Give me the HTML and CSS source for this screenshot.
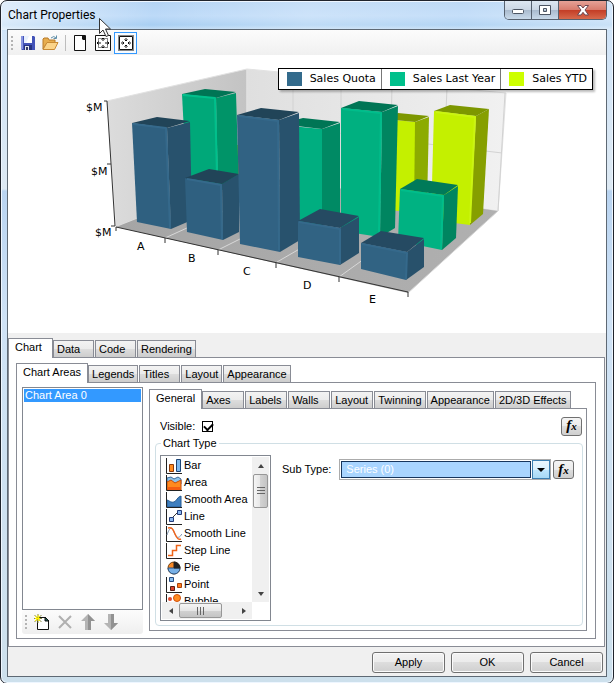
FILE: index.html
```html
<!DOCTYPE html>
<html lang="en">

<head>
  <meta charset="UTF-8" />
  <meta name="viewport" content="width=device-width, initial-scale=1.0" />
  <title>Chart Properties</title>
  <link rel="stylesheet" href="styles.css">
</head>

<body>
  <div class="window">
    <header class="titlebar">
      <h1 class="title">Chart Properties</h1>
      <div class="window-buttons">
        <button class="win-btn" aria-label="Minimize"><svg width="14" height="10" viewBox="0 0 14 10"><rect x="1.500" y="4.500" width="11" height="4" rx="1" fill="#fff" stroke="#4c5563" /></svg></button>
        <button class="win-btn" aria-label="Maximize"><svg width="14" height="11" viewBox="0 0 14 11"><path d="M1.500 .5h11v9h-11z M5.500 3.500v3h3v-3z" fill="#fff" fill-rule="evenodd" stroke="#4c5563" /></svg></button>
        <button class="win-btn win-close" aria-label="Close"><svg width="14" height="11" viewBox="0 0 14 11"><path d="M1.500 .5h3.500l2 2.500 2-2.500h3.500l-3.500 4.500 3.500 5h-3.500l-2-2.700-2 2.700h-3.500l3.500-5z" fill="#fff" stroke="#6b4750" /></svg></button>
      </div>
    </header>

    <main class="client">
      <div class="toolbar">
        <span class="grip"></span>
        <button class="tool" aria-label="Save">
          <svg width="16" height="16" viewBox="0 0 16 16"><path d="M1 1h13l1 1v13H2l-1-1z" fill="#4353b8" /><path d="M1 1h2v13H1z" fill="#8895e0" /><path d="M4 1h8v7H4z" fill="#e8f0fc" /><path d="M9 1h3v7H6z" fill="#fff" /><path d="M4 10h8v5H4z" fill="#26337f" /><path d="M5 11h4v4H5z" fill="#e6e8ef" /><path d="M6 12h2v3H6z" fill="#343c64" /></svg>
        </button>
        <button class="tool" aria-label="Open">
          <svg width="17" height="16" viewBox="0 0 17 16"><path d="M1 14V4l1-1h4l1 2h6v3H5z" fill="#e7ad4e" stroke="#b87b28" /><path d="M1 14.500l4-7h11l-3.500 7z" fill="#fbd48a" stroke="#c88a35" /><path d="M9 3q3-3 5 0M14.500 .5v3h-3" fill="none" stroke="#5f8fa9" /></svg>
        </button>
        <span class="separator"></span>
        <button class="tool" aria-label="Blank page">
          <svg width="16" height="16" viewBox="0 0 16 16"><path d="M2.500 .5h11v15h-11z" fill="#fff" stroke="#111" /><path d="M10 1h4v4h-3l-1-1z" fill="#111" /></svg>
        </button>
        <button class="tool" aria-label="Actual size">
          <svg width="16" height="16" viewBox="0 0 16 16" fill="none" stroke="#111"><path d="M.5 .5h15v15H.5z" fill="#fff" /><path d="M3.500 3.500h9v9h-9z" stroke-dasharray="1 1" /><path d="M8 3v3M8 10v3M2 8h4M10 8h4M6.500 4.500L8 3l1.500 1.500M6.500 11.500L8 13l1.500-1.500M3.500 6.500L2 8l1.500 1.500M12.500 6.500L14 8l-1.500 1.500" /></svg>
        </button>
        <button class="tool tool-on" aria-label="Fit to window" aria-pressed="true">
          <svg width="16" height="16" viewBox="0 0 16 16" fill="none" stroke="#111"><path d="M.5 .5h15v15H.5z" stroke-dasharray="1 1" fill="#fff" /><path d="M1.500 1.500h13v13h-13z" /><path d="M8 3v3M8 10v3M3 8h3M10 8h3M6.500 4.500L8 6l1.500-1.500M6.500 11.500L8 10l1.500 1.500M4.500 6.500L6 8l-1.500 1.500M11.500 6.500L10 8l1.500 1.500" /></svg>
        </button>
      </div>

      <section class="preview">
        <svg class="chart" viewBox="8 55 598 278" role="img" aria-label="Sales by quota, last year and YTD">
          <defs>
            <linearGradient id="wall" x1="0" x2="1"><stop offset="0" stop-color="#dcdcdc" /><stop offset="1" stop-color="#c3c3c3" /></linearGradient>
            <linearGradient id="back" x1="0" x2="1"><stop offset="0" stop-color="#dfdfdf" /><stop offset="1" stop-color="#f1f1f1" /></linearGradient>
            <linearGradient id="floor" x1="0" x2="1"><stop offset="0" stop-color="#a5a5a5" /><stop offset="1" stop-color="#b0b0b0" /></linearGradient>
          </defs>

          <!-- walls and floor -->
          <path d="M107 101L247 69V175L116 227z" fill="url(#wall)" stroke="#e2e2e2" />
          <path d="M247 69L506 93L498 211L247 175z" fill="url(#back)" stroke="#e2e2e2" />
          <path d="M116 227L247 175L498 211L408 293z" fill="url(#floor)" />
          <path d="M247 122L502 153M293 73V182M341 78V188M392 83L390 196M447 88L442 203M505 93L498 211" class="grid-line" />
          <path d="M165 238L290 181M218 250L340 189M277 262L391 196M339 277L442 203M408 293L498 211" class="floor-line" />

          <!-- Sales YTD -->
          <path d="M237 145h3v30h-3z" fill="#a0b800" />
          <path d="M385 119L415 122V212L385 210z" fill="#c4f000" />
          <path d="M415 122L429 117L427 205L414 212z" fill="#8cab00" />
          <path d="M385 119L398 113L429 116L415 122z" fill="#7d9700" />
          <path d="M434 111L476 116L470 225L431 220z" fill="#c4f000" />
          <path d="M476 116L489 109L483 214L470 225z" fill="#869f00" />
          <path d="M434 111L450 105L489 109L476 116z" fill="#7d9700" />
          <path d="M436 112L475 117L470 223" stroke="#cbf510" class="edge" />

          <!-- Sales Last Year -->
          <path d="M182 94L216 98L218 190L187 190z" fill="#00a879" />
          <path d="M216 98L236 93L239 190H218z" fill="#009468" />
          <path d="M182 94L205 89L236 92L216 98z" fill="#007555" />
          <path d="M183 95L215 98L217 175" stroke="#00c08c" class="edge" />
          <path d="M280 125L322 129V225H280z" fill="#00ae80" />
          <path d="M322 129L340 123V222L322 225z" fill="#008a64" />
          <path d="M280 124L303 118L340 122L322 129z" fill="#007555" />
          <path d="M341 108L382 112L380 237L341 231z" fill="#00b080" />
          <path d="M382 112L398 106L395 228L380 237z" fill="#008560" />
          <path d="M341 108L359 101L398 105L382 112z" fill="#007555" />
          <path d="M343 109L381 113L379 235" stroke="#00bd8b" class="edge" />
          <path d="M400 189L444 195L442 250L398 241z" fill="#00b282" />
          <path d="M444 195L458 186L456 238L442 250z" fill="#008560" />
          <path d="M400 189L417 179L458 185L444 195z" fill="#007a59" />
          <path d="M401 190L443 196L441 249" stroke="#00bd8b" class="edge" />

          <!-- Sales Quota -->
          <path d="M132 123L167 128L171 229L137 222z" fill="#2f6080" />
          <path d="M167 128L190 122L192 220L171 229z" fill="#28526d" />
          <path d="M132 123L157 117L190 121L167 128z" fill="#214458" />
          <path d="M133 124L166 128L170 228" stroke="#35698b" class="edge" />
          <path d="M185 178L222 184L223 240L187 232z" fill="#2f6080" />
          <path d="M222 184L239 174V232L223 240z" fill="#28526d" />
          <path d="M185 178L209 169L239 174L222 184z" fill="#214458" />
          <path d="M187 179L221 185L222 239" stroke="#35698b" class="edge" />
          <path d="M237 115L279 120L280 252L240 244z" fill="#316283" />
          <path d="M279 120L299 113L300 240L280 252z" fill="#28526d" />
          <path d="M237 115L261 108L299 112L279 120z" fill="#214458" />
          <path d="M239 116L278 121L279 250" stroke="#35698b" class="edge" />
          <path d="M298 221L340 228V265L298 257z" fill="#316383" />
          <path d="M340 228L359 217V253L340 265z" fill="#28516b" />
          <path d="M298 221L320 209L359 216L340 228z" fill="#254a62" />
          <path d="M299 222L340 229V264" stroke="#35698b" class="edge" />
          <path d="M361 243L407 252L406 280L361 269z" fill="#316383" />
          <path d="M407 252L424 239V267L406 280z" fill="#28516b" />
          <path d="M361 243L381 231L424 238L407 252z" fill="#254a62" />
          <path d="M362 244L407 253L406 279" stroke="#35698b" class="edge" />

          <!-- axes -->
          <path d="M104 101h3L115 226h-4M107 164h4M116 231v-4L408 292v5M165 238v5M218 250v5M276 263v5M339 277v5" fill="none" stroke="#333" />
          <g class="axis-label">
            <text x="86" y="111">$M</text>
            <text x="91" y="175">$M</text>
            <text x="95" y="236">$M</text>
            <text x="137" y="250">A</text>
            <text x="188" y="262">B</text>
            <text x="243" y="275">C</text>
            <text x="303" y="289">D</text>
            <text x="369" y="303">E</text>
          </g>
        </svg>
        <ul class="legend">
          <li><i class="swatch quota"></i>Sales Quota</li>
          <li><i class="swatch last-year"></i>Sales Last Year</li>
          <li><i class="swatch ytd"></i>Sales YTD</li>
        </ul>
      </section>

      <section class="properties">
        <div class="tabs">
          <button class="tab selected">Chart</button>
          <button class="tab">Data</button>
          <button class="tab">Code</button>
          <button class="tab">Rendering</button>
        </div>
        <div class="panel panel-chart">
          <div class="tabs">
            <button class="tab selected">Chart Areas</button>
            <button class="tab">Legends</button>
            <button class="tab">Titles</button>
            <button class="tab">Layout</button>
            <button class="tab">Appearance</button>
          </div>
          <div class="panel panel-areas">
            <div class="areas">
              <ul class="area-list" role="listbox" aria-label="Chart areas">
                <li role="option" aria-selected="true">Chart Area 0</li>
              </ul>
              <div class="area-tools">
                <span class="grip"></span>
                <button class="tool" aria-label="Add">
                  <svg width="16" height="16" viewBox="0 0 16 16"><path d="M3.500 3.500h8l3 3v9h-11z" fill="#fff" stroke="#111" /><path d="M11 3l4 4h-4z" fill="#1b5b4d" stroke="#111" /><path d="M4 0v9M0 4.500h8M.5 1l7 7M7.500 1l-7 7" stroke="#8b8b40" /><path d="M4 1v6M1 4.500h5M1 2l5 5M6 2L1 7" stroke="#fff200" /></svg>
                </button>
                <button class="tool" aria-label="Delete" disabled>
                  <svg width="16" height="16" viewBox="0 0 16 16"><path d="M2 2l12 12M14 2L2 14" fill="none" stroke="#b0b0b0" stroke-width="2" /></svg>
                </button>
                <button class="tool" aria-label="Move up" disabled>
                  <svg width="16" height="16" viewBox="0 0 16 16"><path d="M8 0L1 7h4v9h6V7h4z" fill="#b4b4b4" /><path d="M8 0v16h3V7h4z" fill="#929292" /></svg>
                </button>
                <button class="tool" aria-label="Move down" disabled>
                  <svg width="16" height="16" viewBox="0 0 16 16"><path d="M8 16L1 9h4V0h6v9h4z" fill="#b4b4b4" /><path d="M8 16V0h3v9h4z" fill="#929292" /></svg>
                </button>
              </div>
            </div>

            <div class="area-settings">
              <div class="tabs">
                <button class="tab selected">General</button>
                <button class="tab">Axes</button>
                <button class="tab">Labels</button>
                <button class="tab">Walls</button>
                <button class="tab">Layout</button>
                <button class="tab">Twinning</button>
                <button class="tab">Appearance</button>
                <button class="tab">2D/3D Effects</button>
              </div>
              <div class="panel panel-general">
                <div class="visible-row">
                  <label for="visible">Visible:</label>
                  <input type="checkbox" id="visible" class="check" checked>
                  <button class="fx" aria-label="Visible expression"><i>f</i><i class="x">x</i></button>
                </div>
                <fieldset class="group">
                  <legend>Chart Type</legend>
                  <div class="group-body">
                    <div class="type-box">
                      <ul class="type-list" role="listbox" aria-label="Chart type">
                        <li role="option"><svg class="type-icon" viewBox="0 0 16 16"><path d="M.5 0v15.500H16" class="frame" /><path d="M3.500 6.500h4v7h-4z" fill="#ff8b1f" stroke="#8b3a0a" /><path d="M10.500 1.500h4v12h-4z" fill="#7cb8ee" stroke="#1d4474" /></svg>Bar</li>
                        <li role="option"><svg class="type-icon" viewBox="0 0 16 16"><path d="M1 3l4-1 3 2 4-2 3 2v5H1z" fill="#8cc3ea" stroke="#3a6a9b" /><path d="M1 7l4-2 4 3 6-3v10H1z" fill="#ff8a1e" stroke="#c44b0a" /><path d="M2 12h12v3H2z" fill="#f45d12" /><path d="M.5 0v15.500H16" class="frame" /></svg>Area</li>
                        <li role="option"><svg class="type-icon" viewBox="0 0 16 16"><path d="M1 8c3 1 4 3 7 2s3-5 7-6v11H1z" fill="#3f7fbf" stroke="#245a92" /><path d="M.5 0v15.500H16" class="frame" /></svg>Smooth Area</li>
                        <li role="option"><svg class="type-icon" viewBox="0 0 16 16"><path d="M.5 0v15.500H16" class="frame" /><path d="M5 10l7-7" stroke="#333" /><path d="M3.500 8.500h4v4h-4zM11.500 1.500h4v4h-4z" fill="#8cb8f0" stroke="#233b78" /></svg>Line</li>
                        <li role="option"><svg class="type-icon" viewBox="0 0 16 16"><path d="M.5 0v15.500H16" class="frame" /><path d="M1 9C4 0 6 1 8 6s4 8 8 2" fill="none" stroke="#7d93ad" /><path d="M2 2c4-1 5 1 7 6s4 6 6 5" fill="none" stroke="#f0641c" stroke-width="1.500" /></svg>Smooth Line</li>
                        <li role="option"><svg class="type-icon" viewBox="0 0 16 16"><path d="M.5 0v15.500H16" class="frame" /><path d="M2 12.500h4.500v-5h4v-5H15" fill="none" stroke="#ee6418" stroke-width="1.500" /></svg>Step Line</li>
                        <li role="option"><svg class="type-icon" viewBox="0 0 16 16"><circle cx="8" cy="8" r="6" fill="#f98824" stroke="#70400f" /><path d="M2 8a6 6 0 0 0 12 0z" fill="#78b0e6" stroke="#2a5585" /><path d="M8 8V2a6 6 0 0 1 6 6z" fill="#222" stroke="#222" /></svg>Pie</li>
                        <li role="option"><svg class="type-icon" viewBox="0 0 16 16"><path d="M.5 0v15.500H16" class="frame" /><path d="M3.500 .5h4v4h-4z" fill="#8cc0f0" stroke="#274c80" /><path d="M4.500 9.500h4v4h-4z" fill="#d8402a" stroke="#5c1f14" /><path d="M11.500 6.500h4v4h-4z" fill="#ff7d20" stroke="#a8430c" /></svg>Point</li>
                        <li role="option"><svg class="type-icon" viewBox="0 0 16 16"><path d="M.5 0v15.500H16" class="frame" /><circle cx="4" cy="5" r="2" fill="#e04a30" /><circle cx="11" cy="4" r="3.500" fill="#ff8c22" stroke="#d1500d" /><circle cx="6" cy="11" r="3" fill="#78b0e6" /></svg>Bubble</li>
                      </ul>
                      <div class="scroll-v">
                        <button class="arrow up" aria-label="Scroll up"></button>
                        <span class="thumb"></span>
                        <button class="arrow down" aria-label="Scroll down"></button>
                      </div>
                      <div class="scroll-h">
                        <button class="arrow left" aria-label="Scroll left"></button>
                        <span class="thumb"></span>
                        <button class="arrow right" aria-label="Scroll right"></button>
                      </div>
                    </div>
                    <div class="sub-type">
                      <label for="subtype">Sub Type:</label>
                      <div class="combo">
                        <select id="subtype">
                          <option>Series (0)</option>
                        </select>
                        <span class="combo-arrow"></span>
                      </div>
                      <button class="fx" aria-label="Sub type expression"><i>f</i><i class="x">x</i></button>
                    </div>
                  </div>
                </fieldset>
              </div>
            </div>
          </div>
        </div>
      </section>

      <footer class="actions">
        <button class="action">Apply</button>
        <button class="action">OK</button>
        <button class="action">Cancel</button>
      </footer>
    </main>

    <svg class="pointer" width="13" height="20" viewBox="0 0 13 20"><path d="M.5 .5v15l3.500-3.500 3 6.500 2.500-1-3-6.500h5z" fill="#fff" stroke="#333" /></svg>
  </div>
</body>

</html>
```
FILE: styles.css
```css
* {
  margin: 0;
  padding: 0;
  box-sizing: border-box;
}

body {
  background: #fff;
  color: #000;
  font: 11px/13px "Liberation Sans", Arial, sans-serif;
}

button,
input,
select {
  font: inherit;
  color: inherit;
}

ul {
  list-style: none;
}

/* window frame */
.window {
  position: relative;
  display: flex;
  flex-direction: column;
  min-height: 100vh;
  padding: 0 6px 6px;
  border: 1px solid #20242c;
  border-radius: 7px;
  box-shadow: inset 0 0 0 1px #eef6ff;
  background:
    linear-gradient(100deg, #ffffff90, #ffffff00 25%, #ffffff40 50%, #ffffff20 75%, #ffffff60) 0 0 / 100% 29px no-repeat,
    linear-gradient(#b4d4f4, #bddaf8 15px, #a9cff2 24px, #d0e4f8 30px, #dde9f3 188px, #b9d4f1 190px, #cfe2f5 320px, #cde0ec);
}

.titlebar {
  display: flex;
  justify-content: space-between;
  height: 28px;
}

.title {
  padding: 5px 0 0 1px;
  font: 12px/18px Roboto, "Noto Sans", sans-serif;
}

.window-buttons {
  display: flex;
  height: 19px;
  border: 1px solid #56616f;
  border-top: 0;
  border-radius: 0 0 5px 5px;
  overflow: hidden;
}

.win-btn {
  display: flex;
  align-items: center;
  justify-content: center;
  width: 27px;
  border: 0;
  border-right: 1px solid #56616f;
  background: linear-gradient(#dde7f2, #cad6e4 50%, #a9bacd 50%, #c8d9ea);
}

.win-close {
  width: 47px;
  border-right: 0;
  background: linear-gradient(#e5a297, #d77b6c 50%, #c33c25 50%, #d7694c);
}

.client {
  display: flex;
  flex: 1;
  flex-direction: column;
  border: 1px solid #5e6974;
  background: #f0f0f0;
}

/* toolbars */
.toolbar {
  display: flex;
  align-items: center;
  height: 25px;
  padding: 0 3px;
  background: linear-gradient(#fcfcfc, #f0f0f0);
}

.grip {
  width: 2px;
  height: 14px;
  margin-right: 3px;
  background: repeating-linear-gradient(#b4b4b4 0 2px, transparent 2px 4px);
}

.tool {
  display: flex;
  align-items: center;
  justify-content: center;
  width: 23px;
  height: 22px;
  border: 1px solid transparent;
  background: none;
}

.tool-on {
  border-color: #3399ff;
  background: #f7fbff;
}

.separator {
  width: 1px;
  height: 16px;
  margin: 0 2px 0 3px;
  background: #bdbdbd;
}

/* chart preview */
.preview {
  position: relative;
  background: #fff;
}

.chart {
  display: block;
  width: 100%;
}

.grid-line {
  fill: none;
  stroke: #d2d2d2;
}

.floor-line {
  stroke: #d8d8d8;
}

.edge {
  fill: none;
  stroke-width: 2;
  stroke-linejoin: round;
}

.axis-label,
.legend {
  font-family: "DejaVu Sans", Verdana, sans-serif;
  font-size: 11px;
}

.legend {
  position: absolute;
  top: 13px;
  right: 13px;
  display: flex;
  border: 1px solid #000;
  background: #fff;
  box-shadow: 2px 2px 2px #0004;
  line-height: 20px;
}

.legend li {
  display: flex;
  align-items: center;
  padding: 0 5px 0 8px;
}

.legend li + li {
  border-left: 1px solid #777;
}

.swatch {
  width: 15px;
  height: 14px;
  margin-right: 8px;
}

.quota {
  background: #336b8c;
}

.last-year {
  background: #00c08b;
}

.ytd {
  background: #cdff00;
}

/* tabs */
.properties {
  display: flex;
  flex: 1;
  flex-direction: column;
  padding: 5px 1px 0 0;
}

.tabs {
  position: relative;
  display: flex;
  align-items: flex-end;
  height: 20px;
  margin-bottom: -1px;
}

.tab {
  min-width: 41px;
  height: 18px;
  margin-right: 1px;
  padding: 0 3px;
  border: 1px solid #898c95;
  background: linear-gradient(#f3f3f3, #ebebeb 50%, #dddddd 50%, #cdcdcd);
  text-align: left;
  white-space: nowrap;
}

.area-settings .tab {
  min-width: 42px;
}

.tab.selected {
  min-width: 45px;
  height: 20px;
  margin-right: 0;
  padding: 0 6px 2px;
  border-bottom: 0;
  background: #fff;
}

.panel {
  display: flex;
  flex: 1;
  border: 1px solid #898c95;
  background: #fff;
}

.panel-chart {
  flex-direction: column;
  padding: 5px 8px 7px 7px;
}

.panel-areas {
  gap: 6px;
  padding: 4px 8px 4px 5px;
}

/* chart areas */
.areas {
  display: flex;
  flex-direction: column;
  width: 121px;
}

.area-list {
  flex: 1;
  padding: 1px;
  border: 1px solid #828790;
}

.area-list li {
  padding-left: 1px;
  background: #3399ff;
  color: #fff;
}

.area-tools {
  display: flex;
  align-items: center;
  height: 24px;
  padding-left: 3px;
  border-radius: 3px;
  background: linear-gradient(#fcfcfc, #efefef);
}

.area-settings {
  display: flex;
  flex: 1;
  flex-direction: column;
  padding: 2px 0 3px;
}

.panel-general {
  flex-direction: column;
  padding: 6px 3px 4px 5px;
}

.visible-row {
  display: flex;
  align-items: center;
  height: 22px;
  padding: 0 1px 0 5px;
}

.check {
  appearance: none;
  width: 11px;
  height: 11px;
  margin-left: 7px;
  border: 1px solid #000;
  background: #fff;
}

.check:checked::before {
  content: "";
  display: block;
  width: 7px;
  height: 4px;
  margin: 1px;
  border: solid #000;
  border-width: 0 0 2px 2px;
  transform: rotate(-45deg);
}

.fx {
  width: 21px;
  height: 19px;
  border: 1px solid #707070;
  border-radius: 3px;
  background: linear-gradient(#f4f4f4, #ececec 50%, #dddddd 50%, #cfcfcf);
  font: bold 15px/15px "Liberation Serif", "Times New Roman", serif;
}

.fx .x {
  font-size: 11px;
}

.visible-row .fx {
  margin-left: auto;
}

.group {
  flex: 1;
  padding: 5px 4px 4px;
  border: 1px solid #d0dfe5;
  border-radius: 4px;
}

.group legend {
  margin-left: 1px;
  padding: 0 2px;
}

.group-body {
  display: flex;
  gap: 11px;
}

/* chart type list */
.type-box {
  display: grid;
  grid-template: 1fr 17px / 1fr 17px;
  width: 111px;
  height: 166px;
  padding: 1px;
  border: 1px solid #828790;
}

.type-list {
  min-height: 0;
  overflow: hidden;
}

.type-list li {
  display: flex;
  align-items: center;
  gap: 2px;
  height: 17px;
  padding-left: 4px;
  white-space: nowrap;
}

.type-icon {
  flex: none;
  width: 16px;
  height: 16px;
}

.frame {
  fill: none;
  stroke: #222;
}

.scroll-v,
.scroll-h {
  display: flex;
  align-items: center;
  background: #f0f0f0;
}

.scroll-v {
  flex-direction: column;
}

.thumb {
  display: flex;
  align-items: center;
  justify-content: center;
  border: 1px solid #979797;
  border-radius: 2px;
}

.thumb::before {
  content: "";
  width: 8px;
  height: 8px;
}

.scroll-v .thumb {
  width: 15px;
  height: 34px;
  background: linear-gradient(90deg, #f5f5f5, #e6e6e6 50%, #d2d2d2 50%, #c4c4c4);
}

.scroll-v .thumb::before {
  background: repeating-linear-gradient(#666 0 1px, transparent 1px 3px);
}

.scroll-h .thumb {
  width: 43px;
  height: 15px;
  background: linear-gradient(#f5f5f5, #e6e6e6 50%, #d2d2d2 50%, #c4c4c4);
}

.scroll-h .thumb::before {
  background: repeating-linear-gradient(90deg, #666 0 1px, transparent 1px 3px);
}

.arrow {
  display: flex;
  align-items: center;
  justify-content: center;
  width: 17px;
  height: 17px;
  border: 0;
  background: none;
}

.arrow::before {
  content: "";
  border: 3px solid transparent;
}

.up::before {
  border-top: 0;
  border-bottom: 4px solid #444;
}

.down::before {
  border-bottom: 0;
  border-top: 4px solid #444;
}

.left::before {
  border-left: 0;
  border-right: 4px solid #444;
}

.right::before {
  border-right: 0;
  border-left: 4px solid #444;
}

.down {
  margin-top: auto;
}

.right {
  margin-left: auto;
}

.sub-type {
  display: flex;
  flex: 1;
  align-items: center;
  align-self: flex-start;
  padding: 4px 4px 0 0;
}

.combo {
  display: flex;
  flex: 1;
  height: 21px;
  margin: 0 2px 0 8px;
  border: 1px solid #ababab;
}

.combo select {
  flex: 1;
  min-width: 0;
  margin: 1px;
  padding-left: 4px;
  appearance: none;
  border: 1px solid #17365d;
  border-radius: 0;
  background: #a9d5ff;
  color: #fff;
}

.combo-arrow {
  display: flex;
  align-items: center;
  justify-content: center;
  width: 18px;
  border: 1px solid #3c7fb1;
  background: linear-gradient(#eaf6fd, #d9f0fc 50%, #bee6fd 50%, #a7d9f5);
  pointer-events: none;
}

.combo-arrow::before {
  content: "";
  border: 4px solid transparent;
  border-bottom: 0;
  border-top-color: #000;
}

/* dialog buttons */
.actions {
  display: flex;
  justify-content: flex-end;
  gap: 6px;
  padding: 5px 3px 3px;
}

.action {
  width: 73px;
  height: 21px;
  border: 1px solid #707070;
  border-radius: 3px;
  background: linear-gradient(#f3f3f3, #ebebeb 50%, #dddddd 50%, #cfcfcf);
  box-shadow: inset 0 0 0 1px #fbfbfb;
}

.pointer {
  position: absolute;
  top: 17px;
  left: 98px;
}
```
